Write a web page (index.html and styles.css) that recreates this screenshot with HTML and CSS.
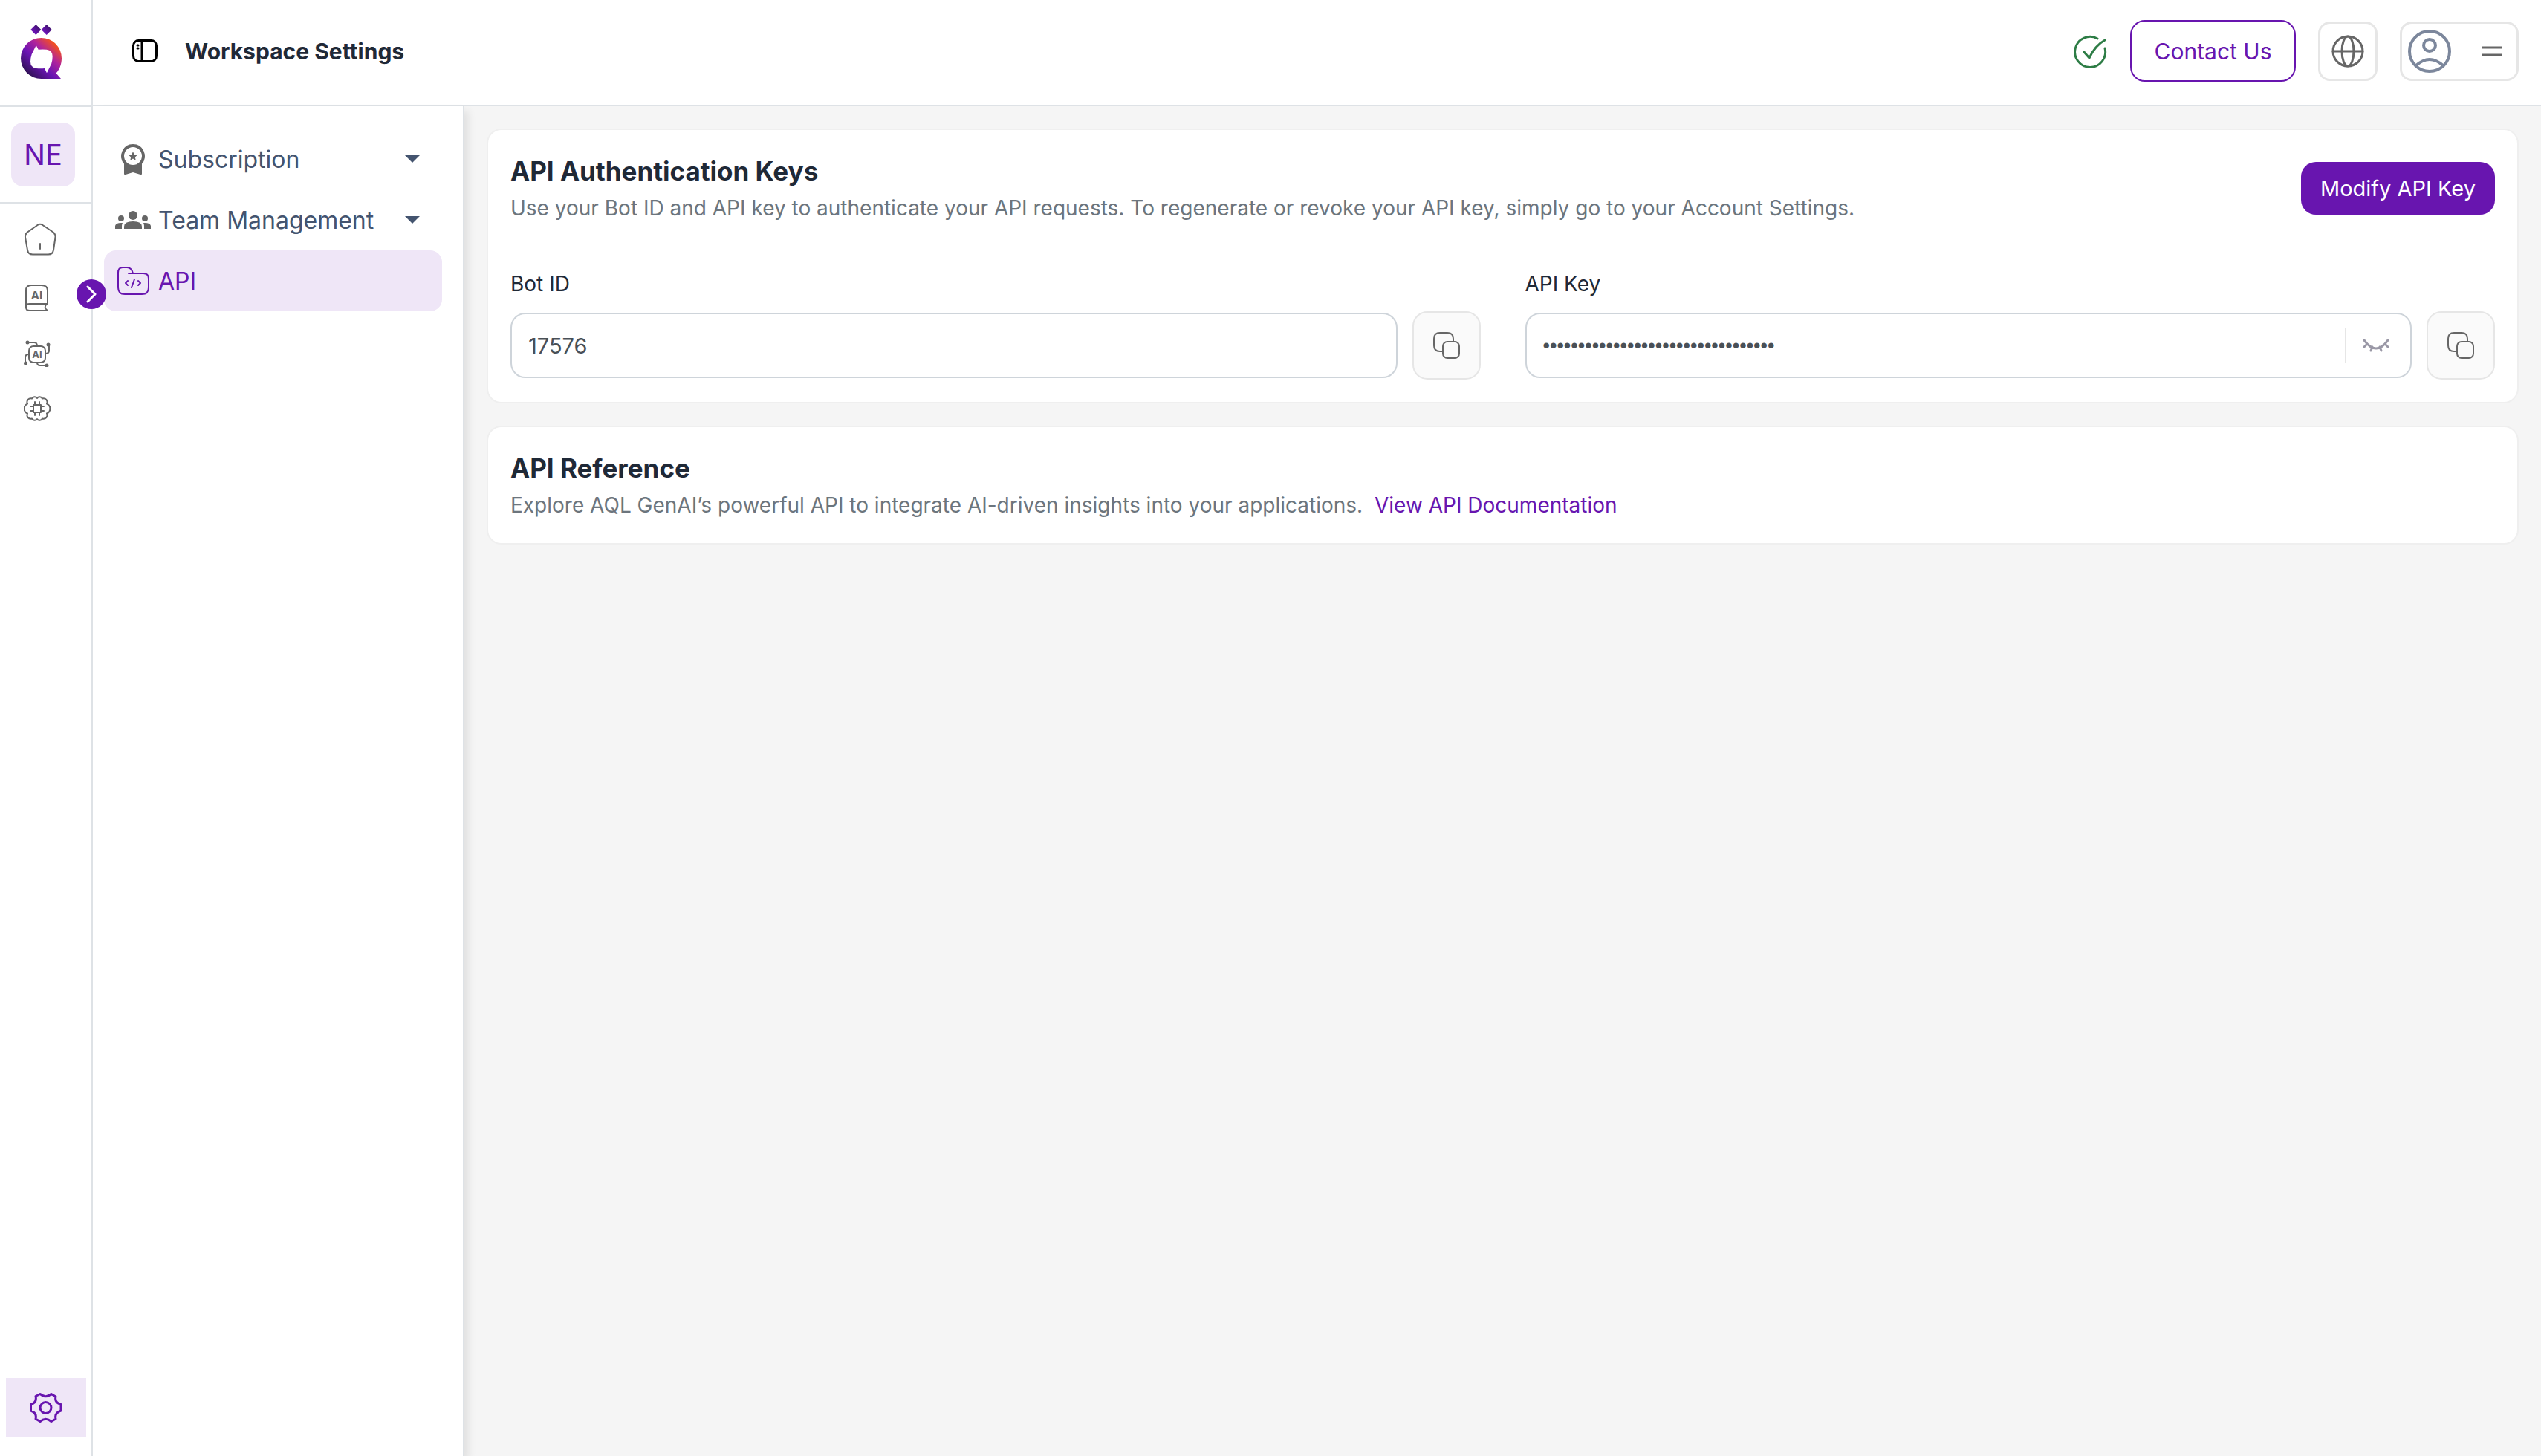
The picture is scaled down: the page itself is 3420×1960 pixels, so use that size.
FILE: index.html
```
<!DOCTYPE html>
<html lang="en">
  <head>
    <meta charset="UTF-8" />
    <meta name="viewport" content="width=device-width, initial-scale=1.0" />
    <title>Workspace Settings</title>
    <link rel="stylesheet" href="styles.css">
  </head>
  <body>
  <div class="app">
    <aside class="rail">
      <a class="logo" href="#" aria-label="Home">
        <svg width="56" height="76" viewBox="0 0 56 76">
          <defs>
            <linearGradient id="ring" x1="0.15" y1="0.9" x2="0.85" y2="0.15">
              <stop offset="0" stop-color="#2d1150" />
              <stop offset="0.4" stop-color="#6a14b4" />
              <stop offset="0.7" stop-color="#b0249c" />
              <stop offset="1" stop-color="#f4511e" />
            </linearGradient>
            <linearGradient id="dots" x1="0" y1="1" x2="1" y2="0">
              <stop offset="0.3" stop-color="#6a14b4" />
              <stop offset="1" stop-color="#2d1150" />
            </linearGradient>
          </defs>
          <path fill="url(#dots)" d="M20.300 1l7 7-7 7-7-7z" />
          <path fill="url(#dots)" d="M34.700 1l7 7-7 7-7-7z" />
          <path fill="url(#ring)" fill-rule="evenodd" d="M27.500 19A27.500 27.500 0 0 0 27.500 74H54l-6.500-7.500C52 62 55 54 55 46.500A27.500 27.500 0 0 0 27.500 19zM20.700 29l3 5.700q6-.5 11 0 8 1 8 9 0 5-1.500 10L35 66.300 32 60q-6 .5-11 0-8-1-8-9 0-5 1.700-10z" />
        </svg>
      </a>
      <div class="workspace"><button class="badge">NE</button></div>
      <nav class="rail-nav">
        <a href="#" aria-label="Dashboard">
          <svg width="44" height="44" viewBox="0 0 44 44"><path d="M18.500 3q3.500-2.500 7 0l14 9.500q3.500 2.500 3 7l-2.500 17q-1 6-7 6H12q-6 0-7-6L2 19.500q-.5-4.500 3-7zM22 28v7" /></svg>
        </a>
        <a href="#" aria-label="Knowledge">
          <svg width="36" height="38" viewBox="0 0 36 38"><path d="M3 32V9q0-7 7-7h14q8 0 8 7v18H8q-5 0-5 4.500T8 36h24q-6-4-1-9" /><text x="17.500" y="21" font-size="15">AI</text></svg>
        </a>
        <a href="#" aria-label="Models">
          <svg width="36" height="36" viewBox="0 0 36 36"><rect x="7" y="8" width="22" height="22" rx="6" /><path d="M6 3h8q4 0 4 5M34 6v8q0 4-5 4M30 34h-8q-4 0-4-4M2 31v-8q0-4 5-4" /><g class="dot"><circle cx="5" cy="3" r="2.500" /><circle cx="33" cy="6" r="2.500" /><circle cx="31" cy="34" r="2.500" /><circle cx="2.500" cy="31" r="2.500" /></g><text x="18" y="24" font-size="13">AI</text></svg>
        </a>
        <a href="#" aria-label="Training">
          <svg width="36" height="36" viewBox="0 0 36 36"><path d="M18 4A4 4 0 0 0 11 4.500 5 5 0 0 0 5 11.500 7 7 0 0 0 5 24.500 5 5 0 0 0 11 31.500 4 4 0 0 0 18 32 4 4 0 0 0 25 31.500 5 5 0 0 0 31 24.500 7 7 0 0 0 31 11.500 5 5 0 0 0 25 4.500 4 4 0 0 0 18 4zM13 13h10v10H13zM15 9v4M21 9v4M15 23v4M21 23v4M9 15h4M9 21h4M23 15h4M23 21h4" /></svg>
        </a>
      </nav>
      <button class="expand" aria-label="Expand menu">
        <svg width="14" height="24" viewBox="0 0 14 24"><path d="M2 2l10 10L2 22" /></svg>
      </button>
      <a class="rail-settings" href="#" aria-label="Settings">
        <svg width="44" height="40" viewBox="0 0 44 40"><path d="M8 4.500L14 1.500Q21.500 8 29 1.500L35 5Q33 13 42 15.500V24Q33 27 35 35L29 38.500Q21.500 32 14 38.500L8 35Q10 27 1.500 24V15.500Q10 13 8 4.500z" /><circle cx="21.500" cy="20" r="7.500" /></svg>
      </a>
    </aside>

    <div class="page">
      <header class="topbar">
        <button class="toggle" aria-label="Toggle sidebar">
          <svg width="34" height="32" viewBox="0 0 34 32"><rect x="1.500" y="1.500" width="31" height="28" rx="7" /><path d="M13 2v27M7 8h1M7 12h1" /></svg>
        </button>
        <h1>Workspace Settings</h1>
        <div class="actions">
          <svg class="check" width="46" height="46" viewBox="0 0 46 46"><path d="M32 6A20.500 20.500 0 1 0 42 19M14 24l7 8Q29 15 42 8" /></svg>
          <button class="contact">Contact Us</button>
          <button class="language" aria-label="Language">
            <svg width="44" height="44" viewBox="0 0 44 44"><circle cx="22" cy="22" r="20" /><ellipse cx="22" cy="22" rx="8" ry="20" /><path d="M2 22h40" /></svg>
          </button>
          <button class="profile" aria-label="Account menu">
            <svg class="avatar" width="58" height="58" viewBox="0 0 58 58"><circle cx="29" cy="29" r="27" /><circle cx="29" cy="21" r="8" /><path d="M11 48q18-16 36 0" /></svg>
            <svg class="lines" width="26" height="16" viewBox="0 0 26 16"><path d="M0 3h26M0 13h26" /></svg>
          </button>
        </div>
      </header>

      <div class="body">
        <nav class="side">
          <a class="item" href="#">
            <svg class="icon" width="48" height="48" viewBox="0 0 48 48"><path fill-rule="evenodd" d="M24 4a16 16 0 0 0-12 26.500V44q0 1.500 2 1l10-3 10 3q2 .5 2-1V30.500A16 16 0 0 0 24 4zm0 4a12 12 0 1 1 0 24 12 12 0 0 1 0-24z" /><path d="M24 14l1.800 4.200 4.400.4-3.400 3 1 4.400-3.800-2.400-3.800 2.400 1-4.400-3.400-3 4.400-.4z" /></svg>
            <span>Subscription</span>
            <svg class="caret" width="20" height="10" viewBox="0 0 20 10"><path d="M0 0h20L10 10z" /></svg>
          </a>
          <a class="item" href="#">
            <svg class="icon" width="48" height="48" viewBox="0 0 48 48"><circle cx="24" cy="18" r="6" /><circle cx="8" cy="22" r="4" /><circle cx="40" cy="22" r="4" /><path d="M12 36v-3q0-7 12-7t12 7v3zM0 36v-4q1-4 8-4h2q-1 2-1 4v4zM48 36v-4q-1-4-8-4h-2q1 2 1 4v4z" /></svg>
            <span>Team Management</span>
            <svg class="caret" width="20" height="10" viewBox="0 0 20 10"><path d="M0 0h20L10 10z" /></svg>
          </a>
          <a class="item active" href="#">
            <svg class="icon" width="48" height="48" viewBox="0 0 48 48"><path d="M18 14h20q7 0 7 7v12q0 9-9 9H13q-9 0-9-9V13q0-7 6-7h6q6 0 8 8M17 24l-3 3 3 3M31 24l3 3-3 3M26 22l-4 11" /></svg>
            <span>API</span>
          </a>
        </nav>

        <main class="content">
          <section class="card">
            <div class="card-head">
              <div>
                <h2>API Authentication Keys</h2>
                <p>Use your Bot ID and API key to authenticate your API requests. To regenerate or revoke your API key, simply go to your Account Settings.</p>
              </div>
              <button class="modify">Modify API Key</button>
            </div>
            <div class="fields">
              <div class="field">
                <label for="botId">Bot ID</label>
                <div class="row">
                  <div class="box"><input type="text" id="botId" value="17576" readonly></div>
                  <button class="copy" aria-label="Copy Bot ID">
                    <svg width="36" height="36" viewBox="0 0 36 36"><path d="M27 12V9q0-8-8-8H9Q1 1 1 9v9q0 8 8 8h3" /><rect x="13" y="13" width="22" height="22" rx="6" /></svg>
                  </button>
                </div>
              </div>
              <div class="field">
                <label for="apiKey">API Key</label>
                <div class="row">
                  <div class="box">
                    <input type="password" id="apiKey" value="000000000000000000000000000000000" readonly>
                    <button class="eye" aria-label="Show API key">
                      <svg width="36" height="18" viewBox="0 0 36 18"><path d="M2 2q16 22 32 0M6 7l-4 4M30 7l4 4M13 11l-2 5M23 11l2 5" /></svg>
                    </button>
                  </div>
                  <button class="copy" aria-label="Copy API key">
                    <svg width="36" height="36" viewBox="0 0 36 36"><path d="M27 12V9q0-8-8-8H9Q1 1 1 9v9q0 8 8 8h3" /><rect x="13" y="13" width="22" height="22" rx="6" /></svg>
                  </button>
                </div>
              </div>
            </div>
          </section>

          <section class="card">
            <h2>API Reference</h2>
            <p>Explore AQL GenAI’s powerful API to integrate AI-driven insights into your applications. <a class="docs" href="#">View API Documentation</a></p>
          </section>
        </main>
      </div>
    </div>
  </div>
  </body>
</html>
```

FILE: styles.css
```
* {
  box-sizing: border-box;
}
body {
  margin: 0;
  font-family: Inter, "Liberation Sans", sans-serif;
  font-size: 28px;
  color: #1f2937;
  background-color: #fff;
}
h1, h2, p {
  margin: 0;
}
a {
  text-decoration: none;
}
button, input {
  font-family: inherit;
  padding: 0;
  border: none;
  background: none;
}
svg {
  display: block;
  flex-shrink: 0;
  fill: none;
  stroke: #666;
  stroke-width: 2;
  stroke-linecap: round;
  stroke-linejoin: round;
}
.app {
  display: flex;
  min-height: 100vh;
}

/* left rail */
.rail {
  position: relative;
  z-index: 2;
  width: 125px;
  flex-shrink: 0;
  display: flex;
  flex-direction: column;
  border-right: 2px solid #dee2e6;
}
.logo {
  height: 144px;
  padding: 32px 28px;
  border-bottom: 2px solid #dee2e6;
}
.logo svg {
  stroke: none;
}
.workspace {
  height: 130px;
  padding: 21px 15px;
  border-bottom: 2px solid #dee2e6;
}
.badge {
  width: 86px;
  height: 86px;
  border-radius: 16px;
  background-color: #efe6f7;
  color: #6815af;
  font-size: 38px;
}
.rail-nav {
  display: flex;
  flex-direction: column;
  gap: 38px;
  padding: 26px 32px;
}
.rail-nav text {
  fill: #666;
  stroke: none;
  font-weight: 700;
  text-anchor: middle;
}
.rail-nav .dot {
  fill: #666;
  stroke: none;
}
.expand {
  position: absolute;
  top: 376px;
  right: -20px;
  width: 40px;
  height: 40px;
  border-radius: 50%;
  background-color: #6815af;
  display: flex;
  align-items: center;
  justify-content: center;
}
.expand svg {
  stroke: #fff;
  stroke-width: 3;
}
.rail-settings {
  height: 79px;
  margin: auto 7px 26px 8px;
  background-color: #efe6f7;
  display: flex;
  align-items: center;
  justify-content: center;
}
.rail-settings svg {
  stroke: #6815af;
  stroke-width: 3;
}

/* top bar */
.page {
  flex: 1;
  display: flex;
  flex-direction: column;
}
.topbar {
  height: 143px;
  padding: 0 30px 4px 53px;
  display: flex;
  align-items: center;
  border-bottom: 2px solid #dee2e6;
}
.toggle svg {
  stroke: #000;
  stroke-width: 3;
}
.topbar h1 {
  margin-left: 37px;
  font-size: 30px;
  font-weight: 700;
}
.actions {
  margin-left: auto;
  display: flex;
  align-items: center;
  gap: 30px;
}
.check {
  stroke: #2e7d46;
  stroke-width: 3;
}
.contact {
  width: 223px;
  height: 83px;
  border: 2px solid #6815af;
  border-radius: 20px;
  color: #6815af;
  font-size: 30px;
}
.language, .profile {
  height: 80px;
  border: 3px solid #e6e6e6;
  border-radius: 16px;
  display: flex;
  align-items: center;
}
.language {
  width: 80px;
  justify-content: center;
}
.language svg {
  stroke-width: 3;
}
.profile {
  width: 160px;
  padding: 0 20px 0 8px;
  justify-content: space-between;
}
.avatar {
  stroke: #7c879c;
  stroke-width: 4;
}
.lines {
  stroke-width: 3;
}

/* settings menu */
.body {
  flex: 1;
  display: flex;
}
.side {
  position: relative;
  width: 500px;
  flex-shrink: 0;
  padding: 30px 28px 30px 15px;
  border-right: 2px solid #dee2e6;
  box-shadow: 6px 6px 10px rgba(0, 0, 0, 0.08);
}
.item {
  height: 82px;
  padding: 0 30px 0 15px;
  display: flex;
  align-items: center;
  gap: 10px;
  border-radius: 16px;
  color: #44546f;
  font-size: 32px;
}
.item .icon {
  fill: #666;
  stroke: none;
}
.item.active {
  background-color: #efe6f7;
  color: #6815af;
}
.item.active .icon {
  fill: none;
  stroke: #6815af;
}
.item .caret {
  margin-left: auto;
  fill: #44546f;
  stroke: none;
}

/* cards */
.content {
  flex: 1;
  padding: 30px;
  display: flex;
  flex-direction: column;
  gap: 30px;
  background-color: #f5f5f5;
}
.card {
  padding: 30px;
  border: 2px solid #efefef;
  border-radius: 20px;
  background-color: #fff;
}
.card-head {
  display: flex;
  align-items: center;
  justify-content: space-between;
}
.card h2 {
  font-size: 35px;
  font-weight: 700;
  line-height: 50px;
}
.card p {
  margin-top: 4px;
  color: #6c757d;
  line-height: 42px;
}
.docs {
  margin-left: 8px;
  color: #6815af;
}
.modify {
  width: 261px;
  height: 71px;
  border-radius: 20px;
  background-color: #6815af;
  color: #fff;
  font-size: 29px;
}
.fields {
  margin-top: 64px;
  display: grid;
  grid-template-columns: 1fr 1fr;
  gap: 60px;
}
.field label {
  display: block;
  height: 54px;
  line-height: 34px;
}
.row {
  display: flex;
  align-items: center;
  gap: 20px;
}
.box {
  flex: 1;
  height: 88px;
  padding-left: 22px;
  display: flex;
  align-items: center;
  border: 2px solid #ced4da;
  border-radius: 20px;
}
.box input {
  flex: 1;
  min-width: 0;
  color: #495057;
  font-size: 29px;
  outline: none;
}
.box input[type="password"] {
  font-family: "Liberation Sans", sans-serif;
  font-size: 27px;
}
.eye {
  height: 48px;
  padding: 0 28px 0 22px;
  border-left: 2px solid #e6e6e6;
}
.eye svg {
  stroke: #9a98a6;
  stroke-width: 3;
}
.copy {
  width: 92px;
  height: 92px;
  border: 2px solid #e6e6e6;
  border-radius: 20px;
  background-color: #fafafa;
  display: flex;
  align-items: center;
  justify-content: center;
}
```
